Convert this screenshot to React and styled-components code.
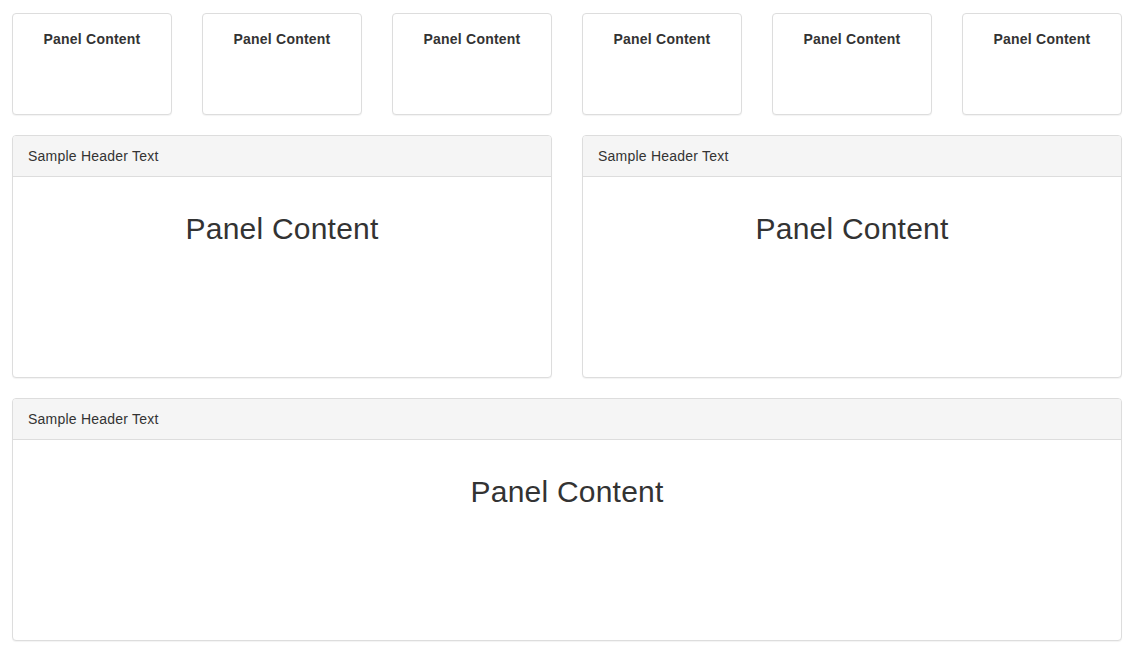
import React from "react";
import styled, { createGlobalStyle } from "styled-components";

const GlobalStyle = createGlobalStyle`
  body {
    margin: 0;
    font-family: "Liberation Sans", Arial, sans-serif;
    font-size: 14px;
    line-height: 20px;
    letter-spacing: 0.22px;
    color: #333;
    background: #fff;
  }
`;

const Page = styled.div`
  padding: 13px 12px;
  display: flex;
  flex-direction: column;
  gap: 20px;
`;

const Row = styled.div`
  display: grid;
  grid-template-columns: repeat(${({ cols }) => cols}, 1fr);
  column-gap: 30px;
`;

const Panel = styled.div`
  background: #fff;
  border: 1px solid #ddd;
  border-radius: 4px;
  box-shadow: 0 1px 1px rgba(0, 0, 0, 0.05);
  overflow: hidden;
`;

const Heading = styled.div`
  background: #f5f5f5;
  border-bottom: 1px solid #ddd;
  padding: 10px 15px;
  line-height: 20px;
`;

const Body = styled.div`
  box-sizing: border-box;
  height: ${({ h }) => h}px;
  padding: 15px;
  text-align: center;
`;

const SmallTitle = styled.div`
  font-weight: bold;
`;

const Title = styled.h2`
  margin: 20px 0 10px;
  font-size: 30px;
  font-weight: 500;
  line-height: 33px;
`;

const Card = ({ header }) => (
  <Panel>
    <Heading>{header}</Heading>
    <Body h={200}>
      <Title>Panel Content</Title>
    </Body>
  </Panel>
);

export default function App() {
  return (
    <>
      <GlobalStyle />
      <Page>
        <Row cols={6}>
          {[0, 1, 2, 3, 4, 5].map((i) => (
            <Panel key={i}>
              <Body h={100}>
                <SmallTitle>Panel Content</SmallTitle>
              </Body>
            </Panel>
          ))}
        </Row>
        <Row cols={2}>
          <Card header="Sample Header Text" />
          <Card header="Sample Header Text" />
        </Row>
        <Row cols={1}>
          <Card header="Sample Header Text" />
        </Row>
      </Page>
    </>
  );
}
